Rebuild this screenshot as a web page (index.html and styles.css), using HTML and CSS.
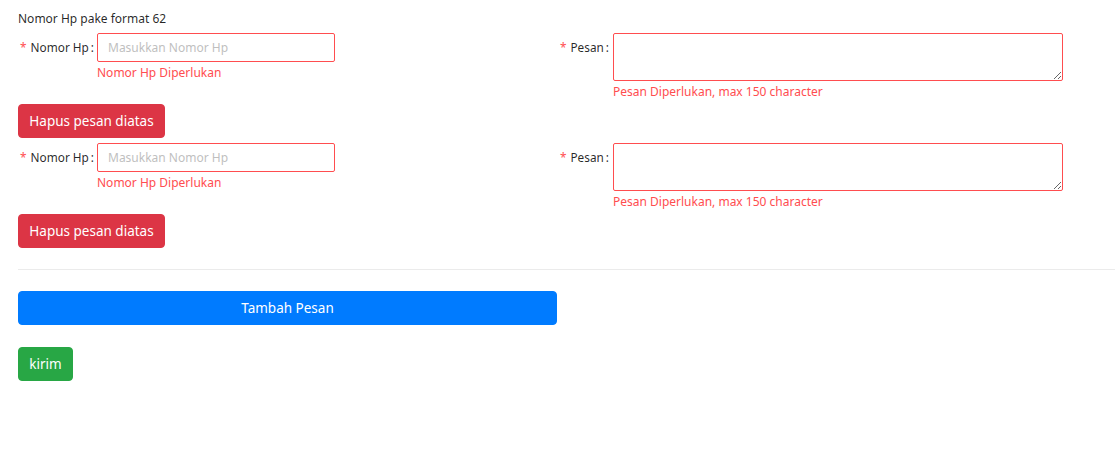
FILE: index.html
```html
<!DOCTYPE html>
<html lang="id">
<head>
<meta charset="utf-8">
<title>Kirim Pesan</title>
<link rel="stylesheet" href="styles.css">
</head>
<body>
<div class="page">
  <div class="intro">Nomor Hp pake format 62</div>

  <div class="msg-row">
    <div class="item item-hp">
      <label class="label label-hp"><span class="req">*</span>Nomor Hp<span class="colon">:</span></label>
      <div class="control">
        <input class="input" type="text" placeholder="Masukkan Nomor Hp">
        <div class="explain">Nomor Hp Diperlukan</div>
      </div>
    </div>
    <div class="item item-pesan">
      <label class="label label-pesan"><span class="req">*</span>Pesan<span class="colon">:</span></label>
      <div class="control">
        <textarea class="textarea"></textarea>
        <div class="explain">Pesan Diperlukan, max 150 character</div>
      </div>
    </div>
  </div>
  <button class="btn btn-danger">Hapus pesan diatas</button>

  <div class="msg-row">
    <div class="item item-hp">
      <label class="label label-hp"><span class="req">*</span>Nomor Hp<span class="colon">:</span></label>
      <div class="control">
        <input class="input" type="text" placeholder="Masukkan Nomor Hp">
        <div class="explain">Nomor Hp Diperlukan</div>
      </div>
    </div>
    <div class="item item-pesan">
      <label class="label label-pesan"><span class="req">*</span>Pesan<span class="colon">:</span></label>
      <div class="control">
        <textarea class="textarea"></textarea>
        <div class="explain">Pesan Diperlukan, max 150 character</div>
      </div>
    </div>
  </div>
  <button class="btn btn-danger">Hapus pesan diatas</button>

  <hr class="divider">

  <button class="btn btn-primary btn-wide">Tambah Pesan</button>
  <button class="btn btn-success btn-send">kirim</button>
</div>
</body>
</html>
```

FILE: styles.css
```css
html, body {
  margin: 0;
  padding: 0;
  background: #fff;
}

body {
  font-family: "Noto Sans", "Open Sans", sans-serif;
  color: rgba(0, 0, 0, 0.85);
}

.page {
  padding: 9px 0 0 18px;
  display: flex;
  flex-direction: column;
  align-items: flex-start;
}

.intro {
  font-size: 12px;
  line-height: 20px;
  margin-bottom: 4px;
}

.msg-row {
  display: flex;
  align-items: flex-start;
  width: 1045px;
}

.item {
  display: flex;
  align-items: flex-start;
}

.item-hp {
  width: 541px;
  flex-shrink: 0;
}

.label {
  flex-shrink: 0;
  font-size: 11.8px;
  line-height: 29px;
  height: 29px;
  display: flex;
  justify-content: flex-end;
  align-items: center;
  white-space: nowrap;
  color: rgba(0, 0, 0, 0.85);
}

.label-hp {
  width: 79px;
}

.label-pesan {
  width: 54px;
}

.req {
  color: #ff4d4f;
  margin-right: 4px;
}

.colon {
  margin: 0 4px 0 2px;
}

.label-hp .colon {
  margin-right: 3px;
}

.control {
  display: flex;
  flex-direction: column;
}

.input {
  box-sizing: border-box;
  width: 238px;
  height: 29px;
  border: 1px solid #ff4d4f;
  border-radius: 2px;
  padding: 0 10px;
  font-family: inherit;
  font-size: 12px;
  color: rgba(0, 0, 0, 0.85);
  outline: none;
  margin: 0;
}

.input::placeholder {
  color: #bfbfbf;
}

.textarea {
  box-sizing: border-box;
  width: 450px;
  height: 48px;
  border: 1px solid #ff4d4f;
  border-radius: 2px;
  padding: 4px 10px;
  font-family: inherit;
  font-size: 12px;
  outline: none;
  margin: 0;
  display: block;
  resize: vertical;
}

.explain {
  color: #ff4d4f;
  font-size: 12px;
  line-height: 20px;
  height: 20px;
  padding-top: 1px;
}

.btn {
  box-sizing: border-box;
  font-family: inherit;
  font-size: 13.5px;
  color: #fff;
  border: 1px solid transparent;
  border-radius: 4px;
  height: 34px;
  padding: 0 12px;
  line-height: 32px;
  white-space: nowrap;
  cursor: pointer;
  margin: 0;
}

.btn-danger {
  background: #dc3545;
  border-color: #dc3545;
  width: 147px;
  padding: 0;
  font-size: 13.5px;
  margin-top: 2px;
  margin-bottom: 5px;
}

.divider {
  align-self: stretch;
  border: 0;
  border-top: 1px solid rgba(0, 0, 0, 0.08);
  margin: 16px 0 21px 0;
  height: 0;
}

.btn-primary {
  background: #007bff;
  border-color: #007bff;
}

.btn-wide {
  width: 539px;
  margin-bottom: 22px;
}

.btn-success {
  background: #28a745;
  border-color: #28a745;
}

.btn-send {
  width: 55px;
  padding: 0;
}
```
